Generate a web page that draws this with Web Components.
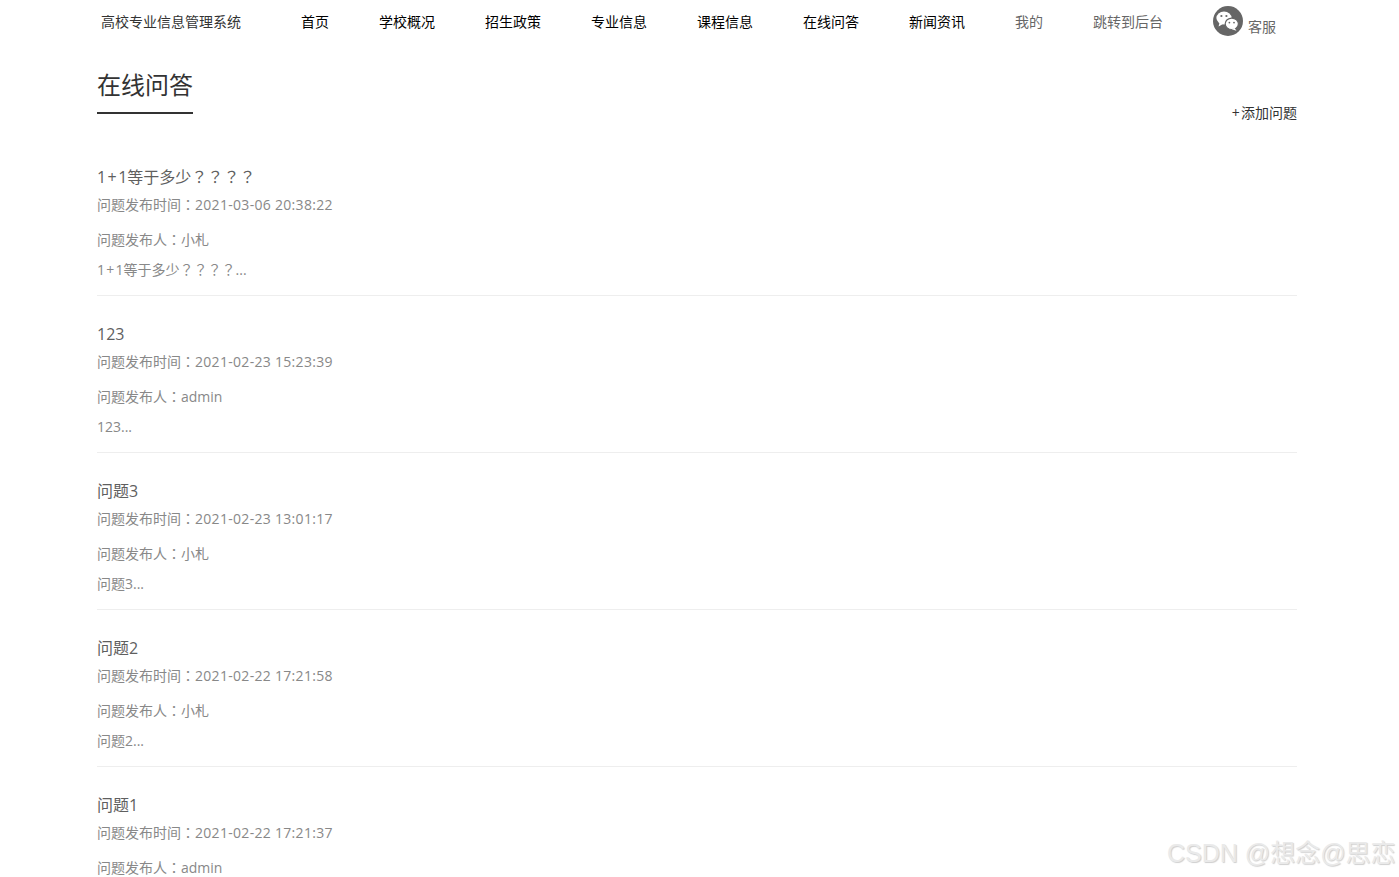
<!DOCTYPE html>
<html lang="zh">
<head>
<meta charset="utf-8">
<title>在线问答</title>
<style>
    html, body { margin: 0; padding: 0; height: 877px; overflow: hidden; background: #fff; }
    body { font-family: "Open Sans", "Noto Sans CJK SC", sans-serif; font-size: 14px; color: #333; position: relative; }
</style>
</head>
<body>
<site-header></site-header>
<qa-page>
    <qa-item title="1+1等于多少？？？？" time="2021-03-06 20:38:22" author="小札" body="1+1等于多少？？？？..."></qa-item>
    <qa-item title="123" time="2021-02-23 15:23:39" author="admin" body="123..."></qa-item>
    <qa-item title="问题3" time="2021-02-23 13:01:17" author="小札" body="问题3..."></qa-item>
    <qa-item title="问题2" time="2021-02-22 17:21:58" author="小札" body="问题2..."></qa-item>
    <qa-item title="问题1" time="2021-02-22 17:21:37" author="admin" body="问题1..."></qa-item>
</qa-page>
<csdn-mark>CSDN @想念@思恋</csdn-mark>

<script>
class SiteHeader extends HTMLElement {
    connectedCallback() {
        const dark = ['首页', '学校概况', '招生政策', '专业信息', '课程信息', '在线问答', '新闻资讯'];
        const links = dark.map(t => `<a>${t}</a>`).join('');
        this.attachShadow({ mode: 'open' });
        this.shadowRoot.innerHTML = `
            <style>
                :host { display: block; height: 45px; }
                nav { display: flex; align-items: flex-start; padding-left: 101px; height: 45px; line-height: 20px; }
                .logo { color: #333; width: 175px; padding-top: 12px; }
                a { color: #000; padding: 12px 25px 0; white-space: nowrap; }
                a.muted { color: #666; }
                .service { display: flex; align-items: flex-start; padding: 6px 0 0 25px; color: #666; }
                .service span { padding: 11px 0 0 5px; }
                svg { display: block; width: 30px; height: 30px; }
            </style>
            <nav>
                <div class="logo">高校专业信息管理系统</div>
                ${links}
                <a class="muted">我的</a>
                <a class="muted">跳转到后台</a>
                <div class="service">
                    <svg viewBox="0 0 30 30">
                        <circle cx="15" cy="15" r="15" fill="#666"/>
                        <ellipse cx="11" cy="12" rx="7.6" ry="6.4" fill="#fff"/>
                        <path d="M6.5 16.5 L5.6 20.5 L10 18 Z" fill="#fff"/>
                        <ellipse cx="18.8" cy="17.8" rx="6.6" ry="5.7" fill="#fff" stroke="#666" stroke-width="1.2"/>
                        <path d="M21.5 22 L23.5 24.8 L18.8 23.2 Z" fill="#fff"/>
                        <circle cx="8.4" cy="10" r="1.1" fill="#666"/>
                        <circle cx="13.4" cy="10" r="1.1" fill="#666"/>
                        <circle cx="16.4" cy="16.6" r="0.9" fill="#666"/>
                        <circle cx="21" cy="16.6" r="0.9" fill="#666"/>
                    </svg>
                    <span>客服</span>
                </div>
            </nav>
        `;
    }
}
customElements.define('site-header', SiteHeader);

class QaPage extends HTMLElement {
    connectedCallback() {
        this.attachShadow({ mode: 'open' });
        this.shadowRoot.innerHTML = `
            <style>
                :host { display: block; width: 1200px; margin-left: 97px; }
                .head { display: flex; justify-content: space-between; align-items: flex-end; height: 69px; margin-bottom: 25px; }
                h2 { margin: 0; font-size: 24px; font-weight: 400; line-height: 34px; color: #333; padding: 9px 0 10px; border-bottom: 2px solid #333; }
                .add { color: #333; line-height: 20px; margin-bottom: -9px; }
                .plus { padding: 0 0.09em; }
            </style>
            <div class="head">
                <h2>在线问答</h2>
                <div class="add"><span class="plus">+</span>添加问题</div>
            </div>
            <slot></slot>
        `;
    }
}
customElements.define('qa-page', QaPage);

// wider plus, and full-width punctuation centred like the reference (Hant glyphs)
const fmt = s => s
    .replace(/\+/g, '<span class="plus">+</span>')
    .replace(/[：？]/g, m => `<span class="p" lang="zh-Hant">${m}</span>`);

class QaItem extends HTMLElement {
    connectedCallback() {
        const title = this.getAttribute('title') || '';
        const time = this.getAttribute('time') || '';
        const author = this.getAttribute('author') || '';
        const body = this.getAttribute('body') || '';
        this.attachShadow({ mode: 'open' });
        this.shadowRoot.innerHTML = `
            <style>
                :host { display: block; height: 156px; border-bottom: 1px solid #eee; }
                h3 { margin: 0; padding-top: 26px; font-size: 16px; font-weight: 400; line-height: 24px; color: #5f5f5f; }
                p { margin: 0; color: #888; line-height: 20px; }
                .p { font-family: "Noto Sans CJK TC", sans-serif; line-height: 0; }
                .plus { padding: 0 0.09em; }
                .num { letter-spacing: 0.3px; }
                .time { margin-top: 6px; }
                .author { margin-top: 15px; }
                .body { margin-top: 10px; }
            </style>
            <h3>${fmt(title)}</h3>
            <p class="time">问题发布时间${fmt('：')}<span class="num">${time}</span></p>
            <p class="author">问题发布人${fmt('：')}${author}</p>
            <p class="body">${fmt(body)}</p>
        `;
    }
}
customElements.define('qa-item', QaItem);

class CsdnMark extends HTMLElement {
    connectedCallback() {
        this.attachShadow({ mode: 'open' });
        this.shadowRoot.innerHTML = `
            <style>
                :host { display: block; position: absolute; left: 1167px; top: 836px; white-space: nowrap; }
                div { font-family: "Liberation Sans", "Noto Sans CJK SC", sans-serif; font-size: 25px; line-height: 34px; color: #eaeaea; text-shadow: 1px 1px 1px #cfcfcf; }
            </style>
            <div><slot></slot></div>
        `;
    }
}
customElements.define('csdn-mark', CsdnMark);
</script>
</body>
</html>
